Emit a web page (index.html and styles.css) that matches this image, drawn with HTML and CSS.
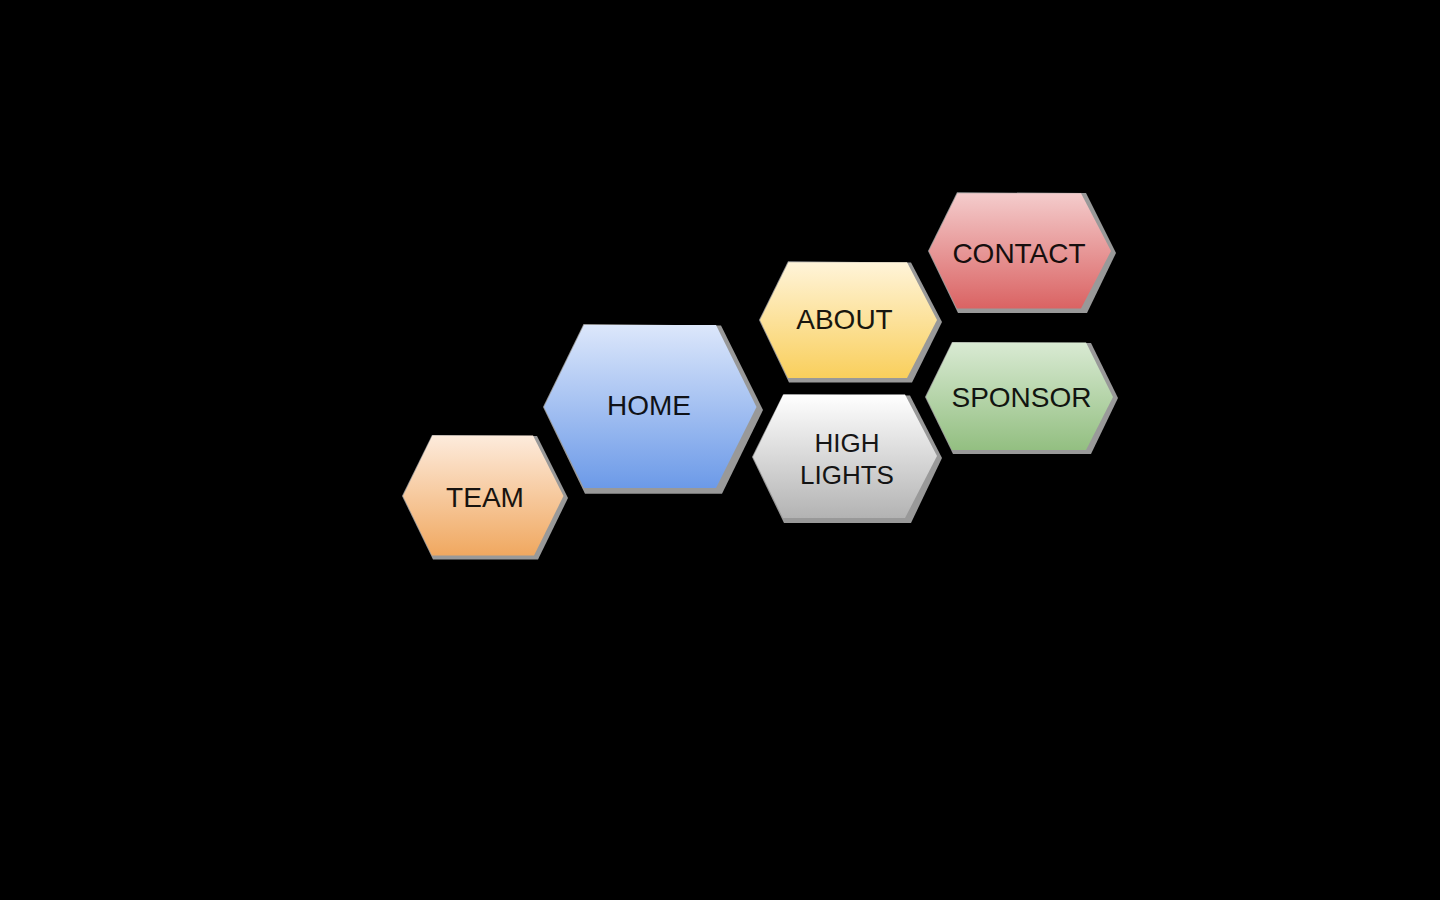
FILE: index.html
```html
<!DOCTYPE html>
<html lang="en">
<head>
<meta charset="utf-8">
<title>Home</title>
<link rel="stylesheet" href="styles.css">
</head>
<body>
<nav class="map" aria-label="Main">
  <a class="hex team" href="#team">
    <svg class="shape" viewBox="0 0 166 125" aria-hidden="true">
      <defs><linearGradient id="orange" x2="0" y2="1"><stop stop-color="#fdebdc"/><stop offset="1" stop-color="#f0a860"/></linearGradient></defs>
      <polygon class="edge" points="0,61 30,0 135,1 166,63 136,124.500 31,124.500"/>
      <polygon fill="url(#orange)" points="1,61 30.500,.5 131,.5 161.500,61 132,120.500 30,120.500"/>
    </svg>
    <span class="label">TEAM</span>
  </a>
  <a class="hex home" href="#home">
    <svg class="shape" viewBox="0 0 220 170" aria-hidden="true">
      <defs><linearGradient id="blue" x2="0" y2="1"><stop stop-color="#dce7fb"/><stop offset="1" stop-color="#6c9ae8"/></linearGradient></defs>
      <polygon class="edge" points="0,83 40.500,0 178,1.500 220,86 179,169.700 42,169.700"/>
      <polygon fill="url(#blue)" points="1,83 41,1 173,1 213.500,83 173,164 41,164"/>
    </svg>
    <span class="label">HOME</span>
  </a>
  <a class="hex about" href="#about">
    <svg class="shape" viewBox="0 0 183 122" aria-hidden="true">
      <defs><linearGradient id="yellow" x2="0" y2="1"><stop stop-color="#fff4d9"/><stop offset="1" stop-color="#f9cf5c"/></linearGradient></defs>
      <polygon class="edge" points="0,59 29,.3 152,1.500 183,61 153,121.500 30,121.500"/>
      <polygon fill="url(#yellow)" points="1,59 29.500,1.200 148,1.200 178,59 148,117 29,117"/>
    </svg>
    <span class="label">ABOUT</span>
  </a>
  <a class="hex highlights" href="#highlights">
    <svg class="shape" viewBox="0 0 190 129" aria-hidden="true">
      <defs><linearGradient id="silver" x2="0" y2="1"><stop stop-color="#ffffff"/><stop offset="1" stop-color="#b3b3b3"/></linearGradient></defs>
      <polygon class="edge" points="0,63 31,.5 158,1.500 190,64 159,129 32,129"/>
      <polygon fill="url(#silver)" points="1,63 31.500,.5 153,.5 185,62 153,124 31,124"/>
    </svg>
    <span class="label">HIGH<br>LIGHTS</span>
  </a>
  <a class="hex contact" href="#contact">
    <svg class="shape" viewBox="0 0 188 121" aria-hidden="true">
      <defs><linearGradient id="red" x2="0" y2="1"><stop stop-color="#f4cccc"/><stop offset="1" stop-color="#da6363"/></linearGradient></defs>
      <polygon class="edge" points="0,59 29,.3 158,1 188,61 159,121 30,121"/>
      <polygon fill="url(#red)" points="1,59 29.500,1.200 153,1.200 183,59 153,116.500 29,116.500"/>
    </svg>
    <span class="label">CONTACT</span>
  </a>
  <a class="hex sponsor" href="#sponsor">
    <svg class="shape" viewBox="0 0 193 112" aria-hidden="true">
      <defs><linearGradient id="green" x2="0" y2="1"><stop stop-color="#d9ead3"/><stop offset="1" stop-color="#93bf81"/></linearGradient></defs>
      <polygon class="edge" points="0,55 27,0 166,1 193,56 166,112 28,112"/>
      <polygon fill="url(#green)" points="1,55 27.500,.5 161,.5 188,55 161,108 27,108"/>
    </svg>
    <span class="label">SPONSOR</span>
  </a>
</nav>
</body>
</html>
```
FILE: styles.css
```css
* {
  box-sizing: border-box;
}

body {
  margin: 0;
  padding-top: 190px;
  background: #000;
  font-family: "Liberation Sans", Arial, sans-serif;
}

/* Hexagons sit at free positions on this canvas. */
.map {
  position: relative;
  width: 800px;
  height: 370px;
  margin: 0 auto;
}

.hex {
  position: absolute;
  display: flex;
  align-items: center;
  justify-content: center;
  color: #000;
  font-size: 28px;
  line-height: 32px;
  text-align: center;
  text-decoration: none;
}

.shape {
  position: absolute;
  inset: 0;
  width: 100%;
  height: 100%;
}

.edge {
  fill: #999;
}

.label {
  position: relative;
  opacity: 0.9;
}

.team {
  left: 82px;
  top: 245px;
  width: 166px;
  height: 125px;
}

.home {
  left: 223px;
  top: 134px;
  width: 220px;
  height: 170px;
  padding: 0 8px 6px 0;
}

.about {
  left: 439px;
  top: 71px;
  width: 183px;
  height: 122px;
  padding: 0 12px 4px 0;
}

.highlights {
  left: 432px;
  top: 204px;
  width: 190px;
  height: 129px;
  font-size: 26px;
}

.contact {
  left: 608px;
  top: 2px;
  width: 188px;
  height: 121px;
  padding: 2px 6px 0 0;
}

.sponsor {
  left: 605px;
  top: 152px;
  width: 193px;
  height: 112px;
}
```
